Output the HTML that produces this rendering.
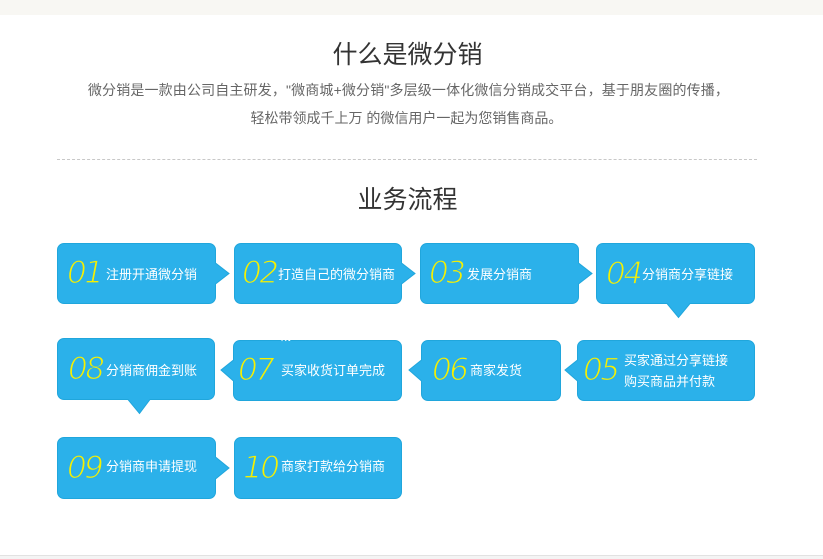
<!DOCTYPE html>
<html lang="zh">
<head>
<meta charset="utf-8">
<style>
html,body{margin:0;padding:0;background:#fff}
#p{position:relative;width:823px;height:559px;overflow:hidden;background:#fff;font-family:"Liberation Sans","Noto Sans CJK SC",sans-serif}
#top{position:absolute;left:0;top:0;width:823px;height:15px;background:#f8f7f3}
#foot{position:absolute;left:0;top:555px;width:823px;height:4px;background:#f4f4f4;border-top:1px solid #e2e2e2;box-sizing:border-box}
.t{position:absolute;white-space:nowrap;text-align:center}
h1{position:absolute;margin:0;left:0;width:815px;text-align:center;font-weight:normal;font-size:25px;line-height:30px;color:#333}
.d{left:0;font-size:14px;line-height:20px;color:#666}
#hr{position:absolute;left:57px;top:159px;width:700px;border-top:1px dashed #c8c8c8}
svg{position:absolute;left:0;top:0}
.l{position:absolute;color:#fff;font-size:13px;line-height:20px;white-space:nowrap}
.n{position:absolute;color:#f7f000;font-family:"DejaVu Sans",sans-serif;font-style:italic;font-size:31px;line-height:30px;letter-spacing:-2.5px;white-space:nowrap;-webkit-text-stroke:1.3px #2bb1ea}
</style>
</head>
<body>
<div id="p">
<div id="top"></div>
<h1 style="top:40px">什么是微分销</h1>
<div class="t d" style="top:80px;width:817px;letter-spacing:.15px">微分销是一款由公司自主研发，"微商城+微分销"多层级一体化微信分销成交平台，基于朋友圈的传播，</div>
<div class="t d" style="top:108px;width:813px">轻松带领成千上万 的微信用户一起为您销售商品。</div>
<div id="hr"></div>
<h1 style="top:185px">业务流程</h1>
<svg width="823" height="559" viewBox="0 0 823 559" fill="#2bb1ea" stroke="#20a6dc" stroke-width="1">
<path d="M64 243.500H209a6.500 6.500 0 0 1 6.500 6.500V263L229 273.500 215.500 284V297a6.500 6.500 0 0 1-6.500 6.500H64a6.500 6.500 0 0 1-6.500-6.500V250a6.500 6.500 0 0 1 6.500-6.500Z"/>
<path d="M241 243.500H395a6.500 6.500 0 0 1 6.500 6.500V263L415 273.500 401.500 284V297a6.500 6.500 0 0 1-6.500 6.500H241a6.500 6.500 0 0 1-6.500-6.500V250a6.500 6.500 0 0 1 6.500-6.500Z"/>
<path d="M427 243.500H572a6.500 6.500 0 0 1 6.500 6.500V263L592 273.500 578.500 284V297a6.500 6.500 0 0 1-6.500 6.500H427a6.500 6.500 0 0 1-6.500-6.500V250a6.500 6.500 0 0 1 6.500-6.500Z"/>
<path d="M603 243.500H748a6.500 6.500 0 0 1 6.500 6.500V297a6.500 6.500 0 0 1-6.500 6.500H690L678.500 317.500 667 303.500H603a6.500 6.500 0 0 1-6.500-6.500V250a6.500 6.500 0 0 1 6.500-6.500Z"/>
<path d="M64 338.500H208a6.500 6.500 0 0 1 6.500 6.500V393a6.500 6.500 0 0 1-6.500 6.500H150L139.500 413.500 128 399.500H64a6.500 6.500 0 0 1-6.500-6.500V345a6.500 6.500 0 0 1 6.500-6.500Z"/>
<path d="M240 340.500H395a6.500 6.500 0 0 1 6.500 6.500V394a6.500 6.500 0 0 1-6.500 6.500H240a6.500 6.500 0 0 1-6.500-6.500V381L221 370 233.500 360V347a6.500 6.500 0 0 1 6.500-6.500Z"/>
<path d="M428 340.500H554a6.500 6.500 0 0 1 6.500 6.500V394a6.500 6.500 0 0 1-6.500 6.500H428a6.500 6.500 0 0 1-6.500-6.500V381L409 370 421.500 360V347a6.500 6.500 0 0 1 6.500-6.500Z"/>
<path d="M584 340.500H748a6.500 6.500 0 0 1 6.500 6.500V394a6.500 6.500 0 0 1-6.500 6.500H584a6.500 6.500 0 0 1-6.500-6.500V381L565 370 577.500 360V347a6.500 6.500 0 0 1 6.500-6.500Z"/>
<path d="M64 437.500H209a6.500 6.500 0 0 1 6.500 6.500V457L229 468 215.500 479V492a6.500 6.500 0 0 1-6.500 6.500H64a6.500 6.500 0 0 1-6.500-6.500V444a6.500 6.500 0 0 1 6.500-6.500Z"/>
<rect x="234.500" y="437.500" width="167" height="61" rx="6.500"/>
</svg>
<div class="n" style="left:67px;top:258px">01</div>
<div class="n" style="left:242px;top:258px">02</div>
<div class="n" style="left:429px;top:258px">03</div>
<div class="n" style="left:606px;top:259px">04</div>
<div class="n" style="left:68px;top:354px">08</div>
<div class="n" style="left:238px;top:355px">07</div>
<div class="n" style="left:432px;top:355px">06</div>
<div class="n" style="left:583px;top:355px">05</div>
<div class="n" style="left:67px;top:453px">09</div>
<div class="n" style="left:243px;top:453px">10</div>
<div class="l" style="left:106px;top:265px">注册开通微分销</div>
<div class="l" style="left:278px;top:265px">打造自己的微分销商</div>
<div class="l" style="left:467px;top:265px">发展分销商</div>
<div class="l" style="left:642px;top:265px">分销商分享链接</div>
<div class="l" style="left:106px;top:361px">分销商佣金到账</div>
<div class="l" style="left:281px;top:361px">买家收货订单完成</div>
<div class="l" style="left:470px;top:361px">商家发货</div>
<div class="l" style="left:624px;top:351px">买家通过分享链接</div>
<div class="l" style="left:624px;top:372px">购买商品并付款</div>
<div class="l" style="left:106px;top:457px">分销商申请提现</div>
<div class="l" style="left:281px;top:457px">商家打款给分销商</div>
<div style="position:absolute;left:278px;top:338px;width:14px;height:4px;overflow:hidden"><div class="l" style="left:0;top:-12px">城</div></div>
<div id="foot"></div>
</div>
</body>
</html>
